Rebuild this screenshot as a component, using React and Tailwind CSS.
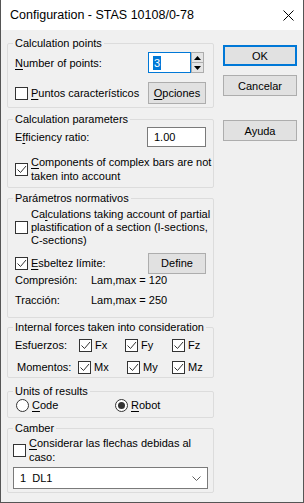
import React from 'react';

const Check = ({ checked, className = '' }) => (
  <span className={`w-[13px] h-[13px] border border-[#333333] bg-white flex items-center justify-center shrink-0 ${className}`}>
    {checked && (
      <svg width="11" height="11" viewBox="0 0 11 11">
        <path d="M1.5 5.5l3 3 5.5-6.5" fill="none" stroke="#333333" strokeWidth="1" />
      </svg>
    )}
  </span>
);

const Radio = ({ checked }) => (
  <span className="w-[13px] h-[13px] rounded-full border border-[#333333] bg-white flex items-center justify-center shrink-0">
    {checked && <span className="w-[7px] h-[7px] rounded-full bg-[#333333]" />}
  </span>
);

const Btn = ({ children, className = '' }) => (
  <div className={`h-[21px] border border-[#adadad] bg-[#e1e1e1] flex items-center justify-center ${className}`}>
    {children}
  </div>
);

const Group = ({ label, className = '', children }) => (
  <fieldset className={`border border-[#dcdcdc] rounded-[2px] ${className}`}>
    <legend className="ml-[5px] px-[2px] leading-[14px]">{label}</legend>
    {children}
  </fieldset>
);

const U = ({ children }) => <span className="underline underline-offset-[2px]">{children}</span>;

export default function App() {
  return (
    <div className="w-[304px] h-[503px] flex flex-col bg-[#f0f0f0] border-x border-b border-[#555555] font-['Liberation_Sans',Arial,sans-serif] text-[11px] text-black leading-[14px]">
      {/* Title bar */}
      <div className="h-[30px] bg-white flex items-center justify-between pl-[9px] pr-[9px] shrink-0">
        <span className="text-[12.5px]">Configuration - STAS 10108/0-78</span>
        <svg width="11" height="11" viewBox="0 0 11 11">
          <path d="M0.5 0.5l10 10M10.5 0.5l-10 10" stroke="#000" strokeWidth="1" />
        </svg>
      </div>

      <div className="flex pl-[6px]">
        {/* Left column */}
        <div className="w-[207px] pt-[6px] flex flex-col">
          <Group label="Calculation points" className="h-[72px]">
            <div className="mt-[2px] h-[21px] flex items-center pl-[7px]">
              <span className="w-[133px]"><U>N</U>umber of points:</span>
              <div className="flex h-[21px]">
                <div className="w-[43px] border border-[#0078d7] bg-white flex items-center pl-[4px]">
                  <span className="bg-[#0078d7] text-white px-[1px] leading-[14px]">3</span>
                </div>
                <div className="w-[13px] flex flex-col border border-[#adadad] bg-[#e5e5e5]">
                  <div className="flex-1 flex items-center justify-center border-b border-[#adadad]">
                    <svg width="7" height="4" viewBox="0 0 7 4"><path d="M3.5 0L7 4H0z" fill="#000" /></svg>
                  </div>
                  <div className="flex-1 flex items-center justify-center">
                    <svg width="7" height="4" viewBox="0 0 7 4"><path d="M0 0h7L3.5 4z" fill="#000" /></svg>
                  </div>
                </div>
              </div>
            </div>
            <div className="mt-[9px] h-[22px] flex items-center pl-[7px]">
              <div className="w-[133px] flex items-center gap-[3px]">
                <Check />
                <span><U>P</U>untos característicos</span>
              </div>
              <Btn className="w-[58px] h-[22px]"><span><U>O</U>pciones</span></Btn>
            </div>
          </Group>

          <Group label="Calculation parameters" className="h-[76px] mt-[4px]">
            <div className="mt-[1px] h-[20px] flex items-center pl-[7px]">
              <span className="w-[132px]">E<U>f</U>ficiency ratio:</span>
              <div className="w-[59px] h-[20px] border border-[#7a7a7a] bg-white flex items-center pl-[6px]">1.00</div>
            </div>
            <div className="mt-[8px] flex items-center pl-[7px] gap-[3px]">
              <Check checked />
              <span className="leading-[14px]"><U>C</U>omponents of complex bars are not<br />taken into account</span>
            </div>
          </Group>

          <Group label="Parámetros normativos" className="h-[127px] mt-[3px]">
            <div className="mt-[3px] flex items-center pl-[7px] gap-[3px]">
              <Check />
              <span className="leading-[13px]">Ca<U>l</U>culations taking account of partial<br />plastification of a section (I-sections,<br />C-sections)</span>
            </div>
            <div className="mt-[6px] h-[20px] flex items-center pl-[7px]">
              <div className="w-[133px] flex items-center gap-[3px]">
                <Check checked />
                <span><U>E</U>sbeltez límite:</span>
              </div>
              <Btn className="w-[58px] h-[20px]">Define</Btn>
            </div>
            <div className="h-[14px] flex items-center pl-[7px]">
              <span className="w-[76px]">Compresión:</span>
              <span>Lam,max = 120</span>
            </div>
            <div className="mt-[6px] h-[14px] flex items-center pl-[7px]">
              <span className="w-[76px]">Tracción:</span>
              <span>Lam,max = 250</span>
            </div>
          </Group>

          <Group label="Internal forces taken into consideration" className="h-[58px] mt-[2px]">
            <div className="mt-[3px] h-[16px] flex items-center pl-[7px]">
              <span className="w-[64px]">Esfuerzos:</span>
              <div className="w-[46px] flex items-center gap-[3px]"><Check checked /><span>Fx</span></div>
              <div className="w-[47px] flex items-center gap-[3px]"><Check checked /><span>Fy</span></div>
              <div className="flex items-center gap-[3px]"><Check checked /><span>Fz</span></div>
            </div>
            <div className="mt-[6px] h-[16px] flex items-center pl-[9px]">
              <span className="w-[61px]">Momentos:</span>
              <div className="w-[49px] flex items-center gap-[3px]"><Check checked /><span>Mx</span></div>
              <div className="w-[45px] flex items-center gap-[3px]"><Check checked /><span>My</span></div>
              <div className="flex items-center gap-[3px]"><Check checked /><span>Mz</span></div>
            </div>
          </Group>

          <Group label="Units of results" className="h-[34px] mt-[6px]">
            <div className="h-[14px] flex items-center pl-[8px]">
              <div className="w-[99px] flex items-center gap-[3px]"><Radio /><span><U>C</U>ode</span></div>
              <div className="flex items-center gap-[3px]"><Radio checked /><span><U>R</U>obot</span></div>
            </div>
          </Group>

          <Group label="Camber" className="h-[72px] mt-[3px]">
            <div className="mt-[1px] flex items-center pl-[5px] gap-[3px]">
              <Check />
              <span className="leading-[14px]"><U>C</U>onsiderar las flechas debidas al<br />caso:</span>
            </div>
            <div className="mt-[3px] ml-[5px] w-[195px] h-[22px] border border-[#7a7a7a] bg-white flex items-center justify-between pl-[6px] pr-[6px]">
              <span>1&nbsp; DL1</span>
              <svg width="9" height="5" viewBox="0 0 9 5"><path d="M0.5 0.5l4 4 4-4" fill="none" stroke="#606060" strokeWidth="1" /></svg>
            </div>
          </Group>
        </div>

        {/* Right column */}
        <div className="ml-[9px] pt-[15px] flex flex-col w-[74px]">
          <div className="h-[21px] border-2 border-[#0078d7] bg-[#e1e1e1] flex items-center justify-center">OK</div>
          <Btn className="mt-[9px]">Cancelar</Btn>
          <Btn className="mt-[24px]">Ayuda</Btn>
        </div>
      </div>
    </div>
  );
}
